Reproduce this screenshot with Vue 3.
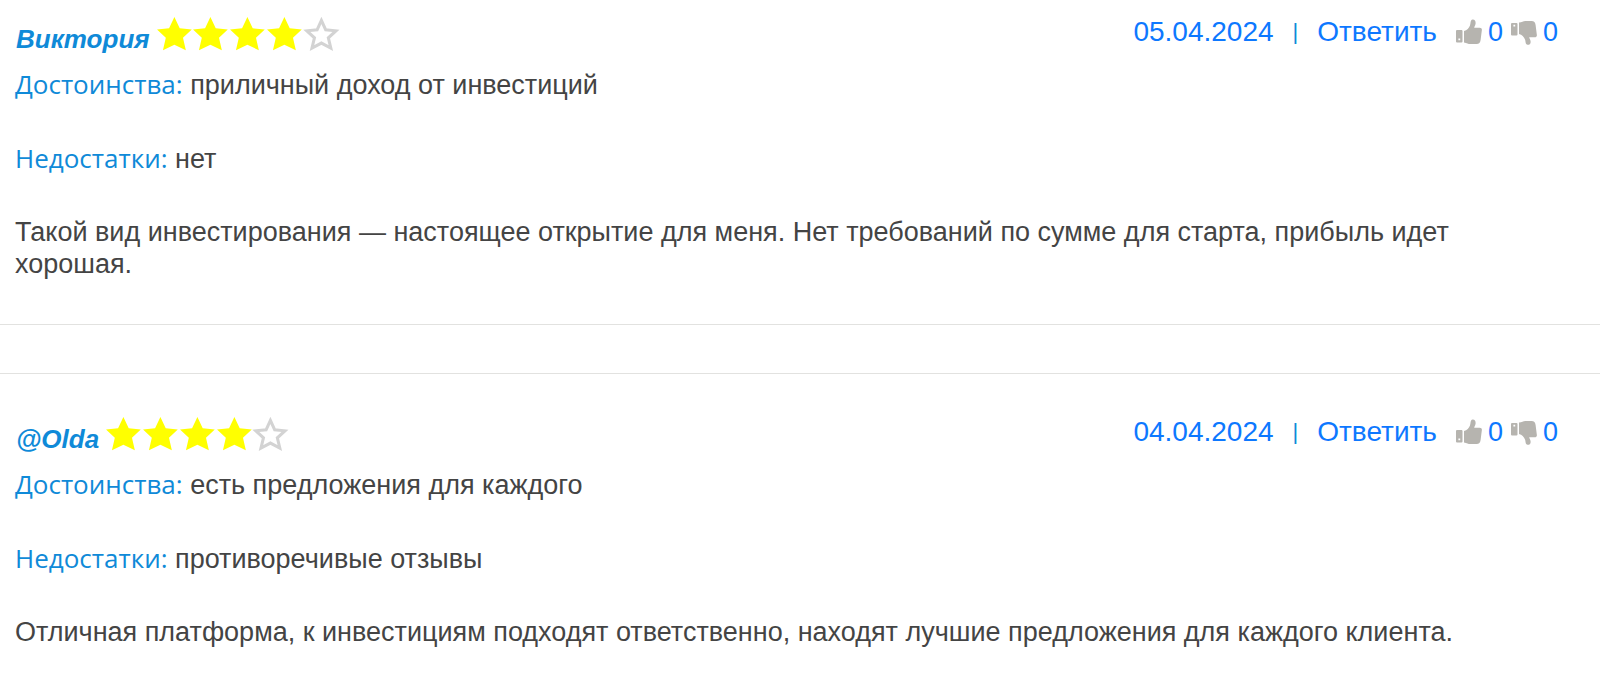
<script setup>
import { ref } from 'vue'

const reviews = ref([
  {
    id: 1,
    author: 'Виктория',
    rating: 4,
    date: '05.04.2024',
    pros: 'приличный доход от инвестиций',
    cons: 'нет',
    text: 'Такой вид инвестирования — настоящее открытие для меня. Нет требований по сумме для старта, прибыль идет хорошая.',
    likes: 0,
    dislikes: 0,
  },
  {
    id: 2,
    author: '@Olda',
    rating: 4,
    date: '04.04.2024',
    pros: 'есть предложения для каждого',
    cons: 'противоречивые отзывы',
    text: 'Отличная платформа, к инвестициям подходят ответственно, находят лучшие предложения для каждого клиента.',
    likes: 0,
    dislikes: 0,
  },
])
</script>

<template>
  <main class="reviews">
    <article v-for="review in reviews" :key="review.id" class="review">
      <header class="head">
        <div class="who">
          <cite class="author">{{ review.author }}</cite>
          <div class="stars" role="img" :aria-label="`Оценка: ${review.rating} из 5`">
            <svg v-for="n in 5" :key="n" class="star" :class="{ on: n <= review.rating }" viewBox="0 0 36 36">
              <path v-if="n <= review.rating" d="M18 1 L23.2 12 L35 13.2 L26.4 21.2 L29.2 33.4 L18 28 L6.8 33.4 L9.6 21.2 L1 13.2 L12.8 12 Z" />
              <path v-else d="M18 4.2 L22.2 13.4 L32.2 14.4 L24.8 21.2 L27.2 31.2 L18 26.4 L8.8 31.2 L11.2 21.2 L3.8 14.4 L13.8 13.4 Z" />
            </svg>
          </div>
        </div>
        <div class="actions">
          <a class="link" href="#">{{ review.date }}</a>
          <span class="bar">|</span>
          <a class="link" href="#">Ответить</a>
          <div class="votes">
            <button class="vote" type="button" aria-label="Нравится" @click="review.likes++">
              <svg class="thumb" viewBox="0 0 26 26">
                <path fill-rule="evenodd" d="M1 11 H5.5 Q6.5 11 6.5 12 V22.4 Q6.5 23.4 5.5 23.4 H1 Q0 23.4 0 22.4 V12 Q0 11 1 11 Z M2.4 19.4 V21.2 H4.2 V19.4 Z" />
                <path d="M8 12 C11 11.5 13 9 14 6.5 C14.8 4.5 14.2 1 16.6 0.6 C19 0.4 20 2.8 19.5 5 C19.2 6.8 18.3 7.6 18.2 8.8 H23.6 C25.4 8.8 26.2 10 25.8 11.6 L24.6 21 C24.2 23.8 23.2 25 20.5 25 H14.5 C12 25 11 23.8 8 23.4 Z" />
              </svg>
              <span>{{ review.likes }}</span>
            </button>
            <button class="vote" type="button" aria-label="Не нравится" @click="review.dislikes++">
              <svg class="thumb" viewBox="0 0 26 26">
                <path fill-rule="evenodd" d="M1 4 H5.5 Q6.5 4 6.5 5 V15.4 Q6.5 16.4 5.5 16.4 H1 Q0 16.4 0 15.4 V5 Q0 4 1 4 Z M2.4 5.8 V7.6 H4.2 V5.8 Z" />
                <path d="M8 15 C11 15.5 13 18 14 20.5 C14.8 22.5 14.2 25.4 16.6 25.8 C19 26 20 24 19.5 21.8 C19.2 20 18.3 19.4 18.2 18.2 H23.6 C25.4 18.2 26.2 17 25.8 15.4 L24.6 6 C24.2 3.2 23.2 2 20.5 2 H14.5 C12 2 11 3.2 8 3.6 Z" />
              </svg>
              <span>{{ review.dislikes }}</span>
            </button>
          </div>
        </div>
      </header>
      <p class="line"><span class="label">Достоинства:</span> {{ review.pros }}</p>
      <p class="line"><span class="label">Недостатки:</span> {{ review.cons }}</p>
      <p class="line">{{ review.text }}</p>
    </article>
  </main>
</template>

<style>
body {
  margin: 0;
  background: #fff;
}
</style>

<style scoped>
.reviews {
  display: flex;
  flex-direction: column;
  gap: 48px;
  overflow: hidden;
  font-family: "Liberation Sans", Arial, sans-serif;
  font-size: 27px;
  line-height: 32px;
  color: #444;
}
.review {
  padding: 42px 42px 44px 15px;
  border-top: 1px solid #e2e2e0;
  border-bottom: 1px solid #e2e2e0;
}
.review:first-child {
  padding-top: 16px;
  border-top: 0;
}
.review:last-child {
  border-bottom: 0;
}
.head {
  display: flex;
  justify-content: space-between;
  align-items: flex-start;
  margin-bottom: 14px;
}
.who {
  display: flex;
  gap: 6px;
}
.author {
  padding: 8px 0 0 1px;
  font-size: 26px;
  line-height: 30px;
  font-weight: 700;
  font-style: italic;
  color: #0f8ad8;
}
.stars {
  display: flex;
  width: 184px;
}
.star {
  flex: 1;
  min-width: 0;
  height: 37px;
  fill: none;
  stroke: #d3d3d3;
  stroke-width: 3;
}
.star.on {
  fill: #ff0;
  stroke: none;
}
.actions {
  display: flex;
  align-items: center;
  color: #0d78ff;
}
.link {
  font-size: 28px;
  color: inherit;
  text-decoration: none;
}
.bar {
  margin: 0 19px;
  font-size: 22px;
  color: #0f8ad8;
}
.votes {
  display: flex;
  gap: 8px;
  margin-left: 19px;
}
.vote {
  display: flex;
  align-items: center;
  gap: 6px;
  padding: 0;
  border: 0;
  background: none;
  font: inherit;
  color: inherit;
  cursor: pointer;
}
.thumb {
  width: 26px;
  height: 26px;
  fill: #b6b4af;
}
.line {
  margin: 0 36px 41px 0;
}
.line:last-child {
  margin-bottom: 0;
}
.label {
  font-family: "Open Sans", sans-serif;
  font-size: 26px;
  color: #0f8ad8;
}
</style>
